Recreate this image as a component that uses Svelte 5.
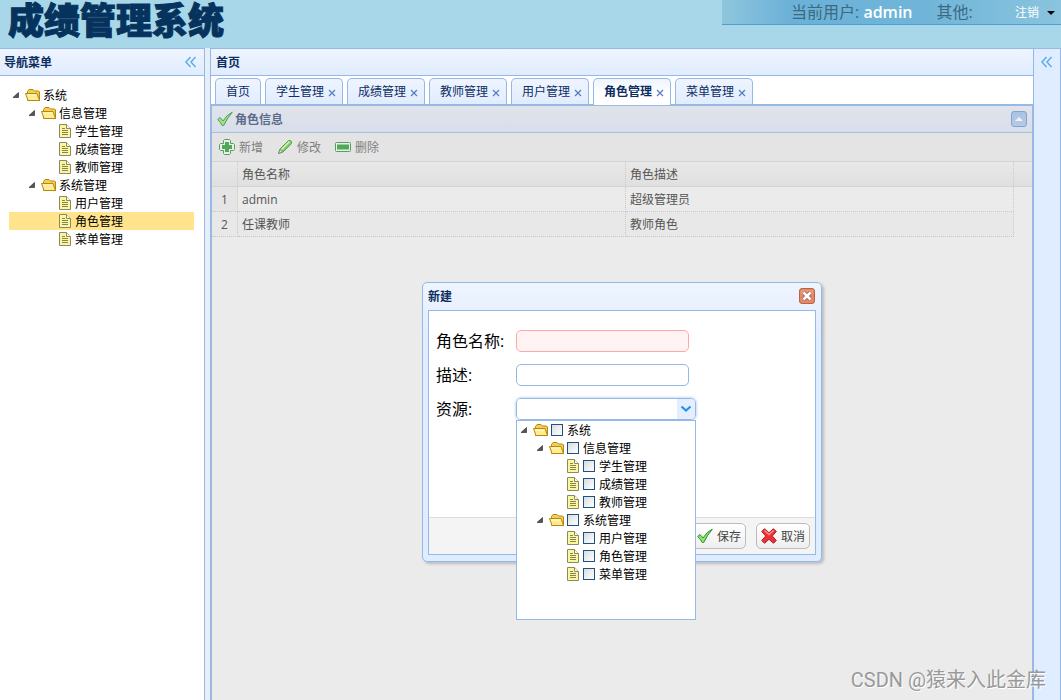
<script lang="ts">
  type Node = { id: string; text: string; depth: number; leaf?: boolean };
  type Tab = { title: string; closable: boolean };

  const menu: Node[] = [
    { id: 'root', text: '系统', depth: 0 },
    { id: 'info', text: '信息管理', depth: 1 },
    { id: 'student', text: '学生管理', depth: 2, leaf: true },
    { id: 'score', text: '成绩管理', depth: 2, leaf: true },
    { id: 'teacher', text: '教师管理', depth: 2, leaf: true },
    { id: 'system', text: '系统管理', depth: 1 },
    { id: 'user', text: '用户管理', depth: 2, leaf: true },
    { id: 'role', text: '角色管理', depth: 2, leaf: true },
    { id: 'menu', text: '菜单管理', depth: 2, leaf: true },
  ];

  const tabs: Tab[] = [
    { title: '首页', closable: false },
    { title: '学生管理', closable: true },
    { title: '成绩管理', closable: true },
    { title: '教师管理', closable: true },
    { title: '用户管理', closable: true },
    { title: '角色管理', closable: true },
    { title: '菜单管理', closable: true },
  ];

  const roles = [
    { name: 'admin', description: '超级管理员' },
    { name: '任课教师', description: '教师角色' },
  ];

  let selected = $state('role');
  let activeTab = $state('角色管理');
  let dialogOpen = $state(true);
  let comboOpen = $state(true);
  let roleName = $state('');
  let description = $state('');
  let checked: string[] = $state([]);

  let resources = $derived(menu.filter((node) => checked.includes(node.id)).map((node) => node.text).join(','));
</script>

{#snippet arrows()}
  <svg width="16" height="16" viewBox="0 0 16 16" fill="none" stroke="#5caee6" stroke-width="1.5">
    <path d="M7.5 3 3 8l4.500 5M12.500 3 8 8l4.500 5" />
  </svg>
{/snippet}

{#snippet nodeIcon(node: Node)}
  {#if !node.leaf}
    <svg class="cell" viewBox="0 0 16 16"><path d="M9.500 5.500v5H4z" fill="#555" stroke="#222" stroke-width=".6" /></svg>
    <svg class="cell" viewBox="0 0 16 16" stroke="#b8860b" stroke-linejoin="round">
      <path d="M2.500 13.500v-9l1.500-2h4l1.500 1.500h4l1 1v8.500z" fill="#f4cf55" />
      <path d="M3 13.500.500 6.500h11.500l2.500 7z" fill="#ffec94" />
      <path d="M2.500 8h9" stroke="#fffbd0" />
    </svg>
  {:else}
    <svg class="cell" viewBox="0 0 16 16" fill="none">
      <path d="M2.500 1.500h7l4 4v9h-11z" fill="#fdf79b" stroke="#8a8868" />
      <path d="M9.500 1.500v4h4" fill="#fffde0" stroke="#8a8868" />
      <path d="M5 5.500h3M5 7.500h6M5 9.500h6M5 11.500h6" stroke="#85835a" />
    </svg>
  {/if}
{/snippet}

{#snippet check()}
  <svg width="16" height="16" viewBox="0 0 16 16"><path d="M.700 8.500 3 6.500l3 3.500Q9.500 4 15.300 1.200 10.500 6.500 6.700 14.500H5.200Q3.500 11 .700 8.500z" fill="#8fe46a" stroke="#2c8c34" stroke-linejoin="round" /></svg>
{/snippet}

<div class="app">
  <header class="north">
    <h1>成绩管理系统</h1>
    <div class="user-bar">
      <span class="current">当前用户: <b>admin</b></span>
      <span>其他:</span>
      <button class="logout" type="button">注销 <i></i></button>
    </div>
  </header>

  <div class="main">
    <nav class="west" aria-label="导航菜单">
      <div class="panel-title">
        <h2>导航菜单</h2>
        <button class="collapse" type="button" aria-label="收起">{@render arrows()}</button>
      </div>
      <ul class="tree">
        {#each menu as node}
          <li>
            <a
              href="#{node.id}"
              class="node depth-{node.depth}"
              class:leaf={node.leaf}
              class:selected={selected === node.id}
              onclick={() => (selected = node.id)}
            >{@render nodeIcon(node)}<span>{node.text}</span></a>
          </li>
        {/each}
      </ul>
    </nav>

    <main class="center">
      <div class="panel-title"><h2>首页</h2></div>
      <div class="tabs">
        {#each tabs as tab}
          <div class="tab" class:active={activeTab === tab.title}>
            <button class="tab-name" type="button" onclick={() => (activeTab = tab.title)}>{tab.title}</button>
            {#if tab.closable}
              <button class="tab-close" type="button" aria-label="关闭{tab.title}">
                <svg width="8" height="8" viewBox="0 0 8 8" stroke="#5a80bd" stroke-width="1.300"><path d="m1 1 6 6m0-6-6 6" /></svg>
              </button>
            {/if}
          </div>
        {/each}
      </div>

      <section class="content">
        <div class="grid-title">
          {@render check()}
          <h3>角色信息</h3>
          <button class="fold" type="button" aria-label="折叠"><i></i></button>
        </div>
        <div class="toolbar">
          <button type="button" onclick={() => (dialogOpen = true)}>
            <svg width="16" height="16" viewBox="0 0 16 16">
              <path d="M5.500.500h5l1 1v3h3l1 1v5l-1 1h-3v3l-1 1h-5l-1-1v-3h-3l-1-1v-5l1-1h3v-3z" fill="#e6f0e4" stroke="#5c9a69" />
              <path d="M6 3h4v3h3v4h-3v3H6v-3H3V6h3z" fill="#4fa956" />
            </svg>
            <span>新增</span>
          </button>
          <button type="button">
            <svg width="16" height="16" viewBox="0 0 16 16" stroke-linejoin="round">
              <path d="M1.500 14.500 3 10l8.500-8.500h2l1 1v2L6 13z" fill="#80cd65" stroke="#58a052" />
              <path d="m4.500 10.500 8-8" stroke="#d8f3bd" stroke-width="1.500" />
              <path d="m1.500 14.500 1.500-4 2.500 2.500z" fill="#eee" stroke="#888" />
            </svg>
            <span>修改</span>
          </button>
          <button type="button">
            <svg width="16" height="16" viewBox="0 0 16 16">
              <rect x=".500" y="3.500" width="15" height="9" rx="1" fill="#e6f0e4" stroke="#5c9a69" />
              <path d="M2 5.500h12v5H2z" fill="#4fa956" />
            </svg>
            <span>删除</span>
          </button>
        </div>
        <table>
          <colgroup><col class="num" /><col /><col /><col class="rest" /></colgroup>
          <thead>
            <tr><th></th><th>角色名称</th><th>角色描述</th><th></th></tr>
          </thead>
          <tbody>
            {#each roles as role, i}
              <tr><td>{i + 1}</td><td>{role.name}</td><td>{role.description}</td><td></td></tr>
            {/each}
          </tbody>
        </table>

        {#if dialogOpen}
          <div class="dialog" role="dialog" aria-labelledby="dialog-title">
            <div class="dialog-title">
              <h3 id="dialog-title">新建</h3>
              <button type="button" aria-label="关闭" onclick={() => (dialogOpen = false)}>
                <svg width="16" height="16" viewBox="0 0 16 16">
                  <rect x=".500" y=".500" width="15" height="15" rx="2.500" fill="#e08a69" stroke="#bd6248" />
                  <path d="M2 2h12v5H2z" fill="#eba184" opacity=".6" />
                  <path d="m4.500 4.500 7 7m0-7-7 7" stroke="#9e5542" stroke-width="4" />
                  <path d="m4.500 4.500 7 7m0-7-7 7" stroke="#fff" stroke-width="2.600" />
                </svg>
              </button>
            </div>
            <div class="dialog-body">
              <form>
                <label for="role-name">角色名称:</label>
                <input id="role-name" class="field invalid" bind:value={roleName} />
                <label for="role-desc">描述:</label>
                <input id="role-desc" class="field" bind:value={description} />
                <label for="role-res">资源:</label>
                <div class="combo">
                  <div class="combo-box">
                    <input id="role-res" readonly value={resources} />
                    <button type="button" aria-label="展开资源" onclick={() => (comboOpen = !comboOpen)}>
                      <svg width="12" height="8" viewBox="0 0 12 8" fill="none" stroke="#1e96e8" stroke-width="2.200"><path d="m1.500 1.500 4.500 4 4.500-4" /></svg>
                    </button>
                  </div>
                  {#if comboOpen}
                    <ul class="dropdown">
                      {#each menu as node}
                        <li>
                          <label class="node depth-{node.depth}" class:leaf={node.leaf}>
                            {@render nodeIcon(node)}<input type="checkbox" value={node.id} bind:group={checked} /><span>{node.text}</span>
                          </label>
                        </li>
                      {/each}
                    </ul>
                  {/if}
                </div>
              </form>
              <div class="dialog-buttons">
                <button type="button">{@render check()}<span>保存</span></button>
                <button type="button" onclick={() => (dialogOpen = false)}>
                  <svg width="16" height="16" viewBox="0 0 16 16">
                    <path d="m3.500.700 4.500 4 4.500-4 2.800 2.800-4 4.500 4 4.500-2.800 2.800-4.500-4-4.500 4-2.800-2.800 4-4.500-4-4.500z" fill="#ee2f36" stroke="#b5202a" stroke-linejoin="round" />
                    <path d="m3.500 2.500 4.500 4 4.500-4" fill="none" stroke="#f99090" stroke-width="1.500" />
                  </svg><span>取消</span>
                </button>
              </div>
            </div>
          </div>
        {/if}
      </section>
    </main>

    <aside class="east">
      <button class="collapse" type="button" aria-label="展开">{@render arrows()}</button>
    </aside>
  </div>
  <div class="watermark">CSDN @猿来入此金库</div>
</div>

<style>
  :global(body) { margin: 0; }
  .app { position: relative; display: flex; flex-direction: column; height: 100vh; overflow: hidden; background: #e6eef8; color: #000; font: 12px/18px "Open Sans", "Noto Sans CJK SC", sans-serif; }
  button { margin: 0; padding: 0; border: 0; background: none; color: inherit; font: inherit; cursor: pointer; }
  h1, h2, h3, ul { margin: 0; padding: 0; list-style: none; }
  h2, h3 { color: #0e2d5f; font-size: 12px; line-height: 16px; }
  svg { display: block; flex: none; }

  .north { display: flex; justify-content: space-between; align-items: flex-start; flex: none; height: 48px; background: #a8d7e9; }
  h1 { padding-left: 8px; color: #06335e; font-size: 36px; font-weight: 900; line-height: 42px; -webkit-text-stroke: 1px #06335e; }
  .user-bar { display: flex; align-items: center; box-sizing: border-box; width: 339px; height: 25px; padding: 0 6px 0 69px; border-bottom: 1px solid #4fa0d2; background: linear-gradient(90deg, #8fc6dd, #6bb1d8 20%, #70b5d9 60%, #8ac4de); color: #3b6a80; font-size: 16px; }
  .current { margin-right: 24px; white-space: pre; }
  .current b { color: #fff; font-weight: 600; }
  .logout { display: flex; gap: 8px; align-items: center; margin-left: auto; padding-top: 2px; color: #fff; font-size: 12px; }
  .logout i { border: 4px solid transparent; border-top-color: #000; border-bottom: 0; }

  .main { display: flex; flex: 1; min-height: 0; }
  .panel-title { display: flex; justify-content: space-between; align-items: center; flex: none; height: 26px; padding: 0 5px 0 4px; border-bottom: 1px solid #95b8e7; background: linear-gradient(#eff5ff, #e0ecff); }
  .panel-title h2 { padding-top: 2px; }
  .west { flex: none; box-sizing: border-box; width: 205px; margin-right: 5px; border: solid #95b8e7; border-width: 1px 1px 0 0; background: #fff; }
  .tree { padding: 10px 10px 10px 9px; }
  .node { display: flex; align-items: center; height: 18px; color: #000; text-decoration: none; white-space: nowrap; }
  .node.selected { background: #ffe48d; }
  .node span { padding: 2px 2px 0; }
  .cell { width: 16px; height: 16px; }
  .depth-1 { padding-left: 16px; }
  .depth-2 { padding-left: 48px; }

  .center { display: flex; flex: 1; flex-direction: column; min-width: 0; border: solid #95b8e7; border-width: 1px 0 0 1px; background: #fff; }
  .center .panel-title { padding-left: 5px; }
  .tabs { display: flex; gap: 4px; flex: none; height: 29px; padding: 2px 4px 0; border-bottom: 1px solid #95b8e7; box-sizing: border-box; }
  .tab { display: flex; gap: 4px; align-items: center; height: 25px; padding: 0 10px; border: 1px solid #95b8e7; border-bottom: 0; border-radius: 5px 5px 0 0; background: linear-gradient(#eff5ff, #e0ecff); color: #0e2d5f; white-space: nowrap; }
  .tab:has(.tab-close) { padding-right: 6px; }
  .tab.active { position: relative; z-index: 1; height: 26px; background: linear-gradient(#eff5ff, #fff 60%); font-weight: 700; }
  .tab-close { padding-top: 2px; }

  .content { position: relative; flex: 1; min-height: 0; border: solid #99bbe2; border-width: 1px 1px 0; background: #ebebeb; color: #555; }
  .grid-title { display: flex; gap: 2px; align-items: center; height: 26px; padding: 0 5px; border-bottom: 1px solid #a6bfe2; background: linear-gradient(#e0e3ea, #d8dfeb); }
  .grid-title > :global(svg) { opacity: .8; }
  .grid-title h3 { padding-top: 2px; color: #5b6b8c; font-weight: 600; }
  .fold { display: grid; place-items: center; box-sizing: border-box; width: 16px; height: 16px; margin-left: auto; border: 1px solid #84a4d0; border-radius: 3px; background: linear-gradient(#a8c3e6, #b7c9e6); }
  .fold i { border: 4px solid transparent; border-top: 0; border-bottom-color: #f0f3f8; }
  .toolbar { display: flex; gap: 14px; align-items: center; height: 28px; padding: 0 7px; border-bottom: 1px solid #d3d3d3; background: #e4e4e4; color: #808080; }
  .toolbar button { display: flex; gap: 4px; align-items: center; }
  .toolbar span, .dialog-buttons span { padding-top: 2px; }

  table { width: 100%; border-spacing: 0; table-layout: fixed; }
  .num { width: 26px; }
  .rest { width: 18px; }
  th, td { box-sizing: border-box; height: 25px; padding: 2px 4px 0; border: dotted #c8c8c8; border-width: 0 1px 1px 0; font-weight: 400; text-align: left; }
  th { border-bottom: 1px solid #d3d3d3; background: linear-gradient(#e8e8e8, #e0e0e0); }
  td:first-child { padding: 2px 0 0; background: #e5e5e5; text-align: center; }
  th:last-child { border-right: 0; }
  td:last-child { border: 0; }
  tbody tr:nth-child(even) td:not(:last-child) { background: #e8e8e8; }

  .dialog { position: absolute; top: 176px; left: 50%; box-sizing: border-box; width: 400px; padding: 0 5px 6px; border: 1px solid #95b8e7; border-radius: 5px; background: linear-gradient(#eff5ff, #e0ecff 20%); box-shadow: 2px 2px 3px #bbb; color: #000; transform: translateX(-50%); }
  .dialog-title { display: flex; justify-content: space-between; align-items: center; height: 26px; padding: 0 1px 1px 0; }
  .dialog-title h3 { padding-top: 2px; }
  .dialog-body { border: 1px solid #95b8e7; background: #fff; }
  form { display: grid; grid-template-columns: 80px 180px; row-gap: 12px; align-items: center; height: 90px; padding: 19px 7px 97px; }
  form > label { font-size: 16px; line-height: 22px; }
  .field { box-sizing: border-box; width: 173px; height: 22px; padding: 0 4px; border: 1px solid #95b8e7; border-radius: 5px; outline: 0; font: inherit; }
  .field.invalid { border-color: #ffa8a8; background: #fff3f3; }
  .combo { position: relative; }
  .combo-box { display: flex; box-sizing: border-box; height: 22px; overflow: hidden; border: 1px solid #95b8e7; border-radius: 5px; box-shadow: 0 0 3px #95b8e7; }
  .combo-box input { flex: 1; min-width: 0; padding: 0 4px; border: 0; outline: 0; font: inherit; }
  .combo-box button { display: grid; place-items: center; width: 18px; background: #e4eeff; }
  .dropdown { position: absolute; top: 22px; left: 0; z-index: 2; box-sizing: border-box; width: 180px; height: 200px; border: 1px solid #95b8e7; background: #fff; }
  .dropdown input { appearance: none; box-sizing: border-box; width: 12px; height: 12px; margin: 0 2px; border: 1px solid #1d5180; background: linear-gradient(135deg, #d9dcdf, #fff); }
  .dropdown input:checked { background: #1d5180; }
  .dialog-buttons { display: flex; gap: 10px; justify-content: flex-end; padding: 5px; border-top: 1px solid #ddd; background: #f4f4f4; color: #444; }
  .dialog-buttons button { display: flex; gap: 4px; align-items: center; box-sizing: border-box; height: 26px; padding: 0 4px; border: 1px solid #bbb; border-radius: 5px; background: linear-gradient(#fff, #eee); }

  .east { flex: none; box-sizing: border-box; width: 28px; padding: 5px; border: 1px solid #95b8e7; border-bottom: 0; background: #e0ecff; }
  .watermark { position: absolute; right: 15px; bottom: 6px; color: #999; font-family: Roboto, "Noto Sans CJK SC", sans-serif; font-size: 20px; line-height: 28px; text-shadow: 1px 1px 0 #fff; pointer-events: none; }
</style>
